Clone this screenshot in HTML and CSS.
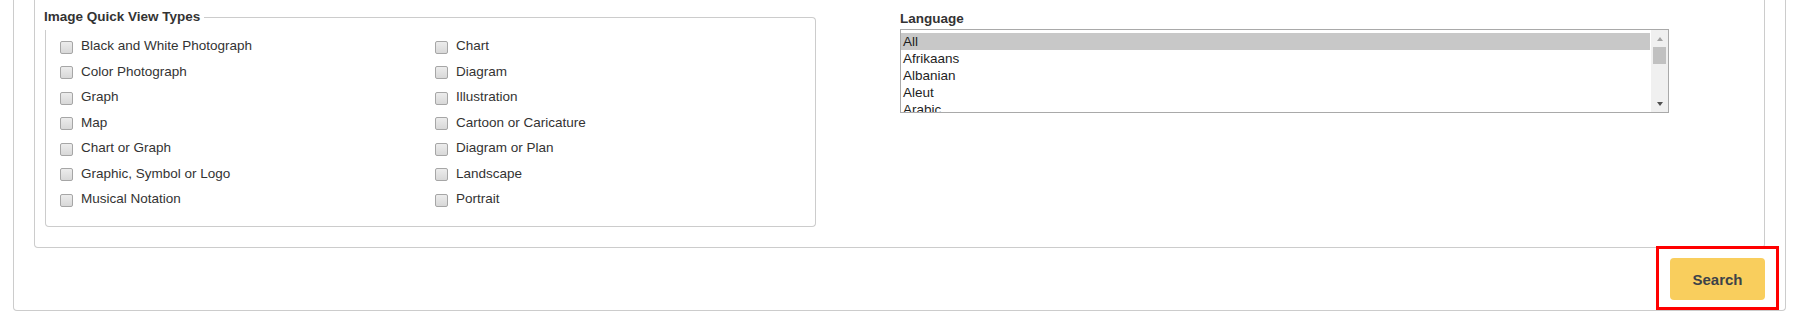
FILE: index.html
```html
<!DOCTYPE html>
<html lang="en">

<head>
    <title>Advanced Search</title>
    <link rel="stylesheet" href="styles.css">
</head>

<body>

    <div id="search-box">

        <div class="panel">
            <div class="cols">

                <div class="group">
                    <div class="group-head">
                        <span class="group-title">Image Quick View Types</span>
                        <span class="group-line"></span>
                    </div>
                    <div class="group-body">
                        <div class="check-col">
                            <label class="check"><input type="checkbox" name="qv">Black and White Photograph</label>
                            <label class="check"><input type="checkbox" name="qv">Color Photograph</label>
                            <label class="check"><input type="checkbox" name="qv">Graph</label>
                            <label class="check"><input type="checkbox" name="qv">Map</label>
                            <label class="check"><input type="checkbox" name="qv">Chart or Graph</label>
                            <label class="check"><input type="checkbox" name="qv">Graphic, Symbol or Logo</label>
                            <label class="check"><input type="checkbox" name="qv">Musical Notation</label>
                        </div>
                        <div class="check-col">
                            <label class="check"><input type="checkbox" name="qv">Chart</label>
                            <label class="check"><input type="checkbox" name="qv">Diagram</label>
                            <label class="check"><input type="checkbox" name="qv">Illustration</label>
                            <label class="check"><input type="checkbox" name="qv">Cartoon or Caricature</label>
                            <label class="check"><input type="checkbox" name="qv">Diagram or Plan</label>
                            <label class="check"><input type="checkbox" name="qv">Landscape</label>
                            <label class="check"><input type="checkbox" name="qv">Portrait</label>
                        </div>
                    </div>
                </div>

                <div class="lang">
                    <div class="field-label">Language</div>
                    <div class="listbox">
                        <div class="options">
                            <div class="option selected">All</div>
                            <div class="option">Afrikaans</div>
                            <div class="option">Albanian</div>
                            <div class="option">Aleut</div>
                            <div class="option">Arabic</div>
                        </div>
                        <div class="scrollbar">
                            <span class="sb-btn"><span class="arrow-up"></span></span>
                            <span class="sb-thumb"></span>
                            <span class="sb-track"></span>
                            <span class="sb-btn"><span class="arrow-down"></span></span>
                        </div>
                    </div>
                </div>

            </div>
        </div>

        <div class="actions">
            <span class="highlight"><button type="submit" class="btn-search">Search</button></span>
        </div>

    </div>

</body>
</html>
```

FILE: styles.css
```css
body {
    font-family: "Liberation Sans", Arial, sans-serif;
    font-size: 13.5px;
    color: #333;
    background-color: #fff;
    margin: 0;
    padding: 0;
}

#search-box {
    margin: 0 16px 0 13px;
    padding: 0 20px 10px 20px;
    border: 1px solid #ccc;
    border-top: none;
    border-radius: 0 0 4px 4px;
}

.panel {
    padding: 4px 10px 20px 10px;
    border: 1px solid #ccc;
    border-top: none;
    border-radius: 0 0 4px 4px;
}

.cols {
    display: grid;
    grid-template-columns: 771px 769px;
    column-gap: 84px;
}

/* fieldset look */
.group-head {
    display: flex;
    height: 26px;
    margin-left: -1px;
}

.group-title {
    font-weight: bold;
    line-height: 26px;
    padding-right: 4px;
}

.group-line {
    flex: 1;
    margin-top: 13px;
    border-top: 1px solid #ccc;
    border-right: 1px solid #ccc;
    border-top-right-radius: 4px;
}

.group-body {
    display: grid;
    grid-template-columns: 375px 1fr;
    padding: 3px 14px 14.5px 14px;
    border: 1px solid #ccc;
    border-top: none;
    border-radius: 0 0 4px 4px;
}

.check {
    display: flex;
    align-items: center;
    gap: 8px;
    height: 25.5px;
}

.check input {
    appearance: none;
    -webkit-appearance: none;
    width: 13px;
    height: 13px;
    margin: 3px 0 0 0;
    border: 1px solid #a6a6a6;
    border-radius: 2px;
    background: linear-gradient(#ececec, #d8d8d8);
    flex: none;
}

/* language list */
.field-label {
    font-weight: bold;
    line-height: 17px;
    margin: 6px 0 2px 0;
}

.listbox {
    display: flex;
    height: 82px;
    border: 1px solid #a9a9a9;
    color: #1e1e1e;
}

.options {
    flex: 1;
    padding-top: 3px;
    margin-right: 1px;
    overflow: hidden;
}

.option {
    line-height: 17px;
    height: 17px;
    padding-left: 2px;
}

.option.selected {
    background-color: #c8c8c8;
}

.scrollbar {
    width: 17px;
    display: flex;
    flex-direction: column;
    background-color: #f0f0f0;
}

.sb-btn {
    height: 17px;
    display: flex;
    align-items: center;
    justify-content: center;
}

.arrow-up {
    width: 0;
    height: 0;
    border-left: 3.5px solid transparent;
    border-right: 3.5px solid transparent;
    border-bottom: 4px solid #a3a3a3;
}

.arrow-down {
    width: 0;
    height: 0;
    border-left: 3.5px solid transparent;
    border-right: 3.5px solid transparent;
    border-top: 4px solid #505050;
}

.sb-thumb {
    height: 17px;
    margin: 0 2px;
    background-color: #c1c1c1;
}

.sb-track {
    flex: 1;
}

/* button */
.actions {
    display: flex;
    justify-content: flex-end;
    margin-top: 10px;
}

.highlight {
    position: relative;
    display: inline-block;
}

.highlight::after {
    content: "";
    position: absolute;
    top: -12px;
    left: -14px;
    right: -14px;
    bottom: -10px;
    border: 3px solid #ff0000;
}

.btn-search {
    display: block;
    width: 95px;
    height: 42px;
    background-color: #f9ce5d;
    color: #3c4249;
    border: none;
    border-radius: 4px;
    font-family: "Liberation Sans", Arial, sans-serif;
    font-size: 15px;
    font-weight: bold;
    cursor: pointer;
}
```
